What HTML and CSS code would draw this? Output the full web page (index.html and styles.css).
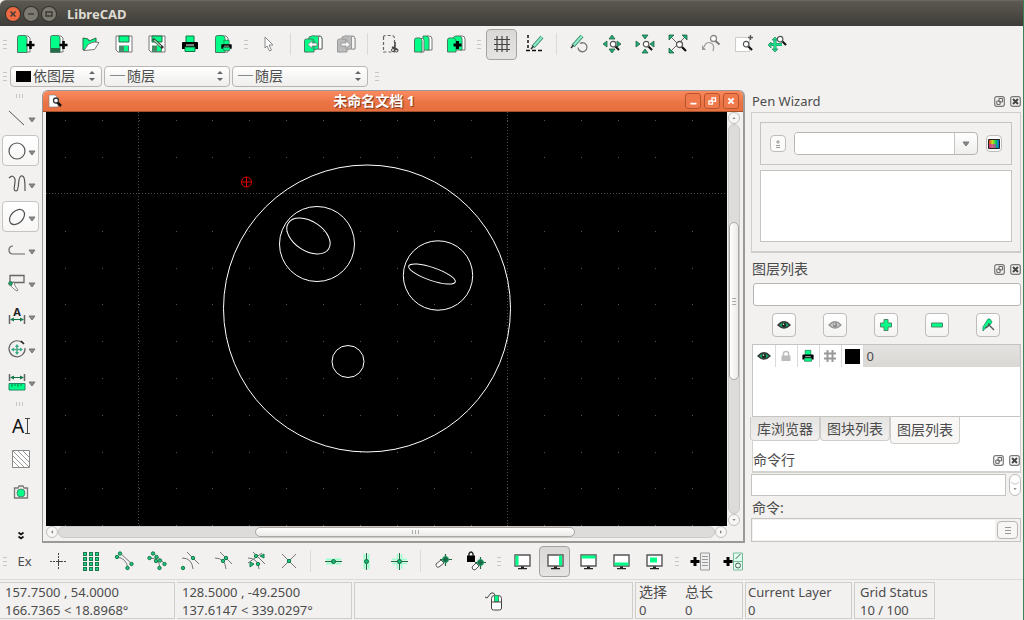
FILE: index.html
```html
<!DOCTYPE html>
<html lang="zh-CN">
<head>
<meta charset="utf-8">
<title>LibreCAD</title>
<link rel="stylesheet" href="styles.css">
</head>
<body>
<svg class="defs" aria-hidden="true">
  <defs>
    <symbol id="eye" viewBox="0 0 14 10"><path d="M1 5Q7-1.500 13 5Q7 11 1 5z" fill="currentColor" stroke="#333" stroke-width="1.300"/><circle cx="7" cy="5" r="2.200" fill="#222"/><circle cx="6.500" cy="4.300" r=".8" fill="#dfd"/></symbol>
    <symbol id="printer" viewBox="0 0 20 20"><path d="M6 2h8v7H6z" fill="#0f8" stroke="#174" /><path d="M3 8h14q1 0 1 1v6h-3v-2H5v2H2V9q0-1 1-1z" fill="#000"/><path d="M6 11h8" stroke="#fff"/><path d="M5 13h10v4.500H5z" fill="#0f8" stroke="#174"/></symbol>
    <symbol id="lens" viewBox="0 0 12 12"><path d="M7 7l4 4" stroke="#111" stroke-width="2.200"/><circle cx="4.500" cy="4.500" r="3" fill="#fff" stroke="#555" stroke-width="1.300"/></symbol>
    <symbol id="monitor" viewBox="0 0 20 20"><path d="M3 4h15v11H3z" fill="#fff" stroke="#555" stroke-width="1.400"/><path d="M9 15.500h3V17h3v1.200H6V17h3z" fill="#222"/></symbol>
    <symbol id="float" viewBox="0 0 11 11"><rect x=".7" y=".7" width="9.600" height="9.600" rx="2" fill="none" stroke="#777" stroke-width="1.200"/><path d="M5 2.500h3.500V6H5zM2.800 5h3.400v3.400H2.800z" fill="#f2f1f0" stroke="#666"/></symbol>
    <symbol id="close" viewBox="0 0 11 11"><rect x=".7" y=".7" width="9.600" height="9.600" rx="2" fill="none" stroke="#777" stroke-width="1.200"/><path d="M3 3l5 5M8 3L3 8" stroke="#444" stroke-width="2"/></symbol>
    <symbol id="updown" viewBox="0 0 8 12"><path d="M1 4l3-3 3 3zM1 8l3 3 3-3z" fill="#666"/></symbol>
    <symbol id="down" viewBox="0 0 8 6"><path d="M1 1h6L4 5z" fill="#888" stroke="#777"/></symbol>
    <linearGradient id="hue"><stop offset="0" stop-color="#e22"/><stop offset=".35" stop-color="#cd2"/><stop offset=".65" stop-color="#1c5"/><stop offset="1" stop-color="#15f"/></linearGradient>
  </defs>
</svg>

<header class="titlebar">
  <button class="wm wm-close" aria-label="关闭"><svg viewBox="0 0 14 14"><path d="M4.500 4.500l5 5M9.500 4.500l-5 5"/></svg></button>
  <button class="wm" aria-label="最小化"><svg viewBox="0 0 14 14"><path d="M4 7h6"/></svg></button>
  <button class="wm" aria-label="最大化"><svg viewBox="0 0 14 14"><path d="M4 5h6v4H4z"/></svg></button>
  <h1>LibreCAD</h1>
</header>

<nav class="toolbar" aria-label="文件">
  <i class="grip first"></i>
  <button class="tool" aria-label="新建"><svg viewBox="0 0 20 20"><path d="M10 2h3l2 2v14h-5z" fill="#fff" stroke="#777"/><path d="M2.500 3.500q0-2 2-2H10q2 1 2 3v14H2.500z" fill="#0f8" stroke="#4a7a60"/><path d="M15.500 7v8M11.500 11h8" stroke="#000" stroke-width="2.600"/></svg></button>
  <button class="tool" aria-label="从模板新建"><svg viewBox="0 0 20 20"><path d="M10 2h3l2 2v14h-5z" fill="#fff" stroke="#777"/><path d="M2.500 3.500q0-2 2-2H10q2 1 2 3v14H2.500z" fill="#0f8" stroke="#4a7a60"/><path d="M3 14h9v4H3z" fill="#276b48"/><path d="M15.500 7v8M11.500 11h8" stroke="#000" stroke-width="2.600"/></svg></button>
  <button class="tool" aria-label="打开"><svg viewBox="0 0 20 20"><path d="M2 4l5 1 1 2 7-3v4L8 10l-4 6H2z" fill="#0f8" stroke="#276b48"/><path d="M3 16.500L7.500 10 13 8l5 .5-4.500 7z" fill="#fff" stroke="#777"/></svg></button>
  <button class="tool" aria-label="保存"><svg viewBox="0 0 20 20"><path d="M2 2h16v16H4l-2-2z" fill="#fff" stroke="#777"/><path d="M5 2h10v6H5z" fill="#0f8" stroke="#276b48"/><path d="M5 11.500h10V18H5z" fill="#4a8968"/><path d="M10 12h4v5h-4z" fill="#0f8"/></svg></button>
  <button class="tool" aria-label="另存为"><svg viewBox="0 0 20 20"><path d="M2 2h16v16H4l-2-2z" fill="#fff" stroke="#777"/><path d="M5 2h10v6H5z" fill="#0f8" stroke="#276b48"/><path d="M5 11.500h10V18H5z" fill="#4a8968"/><path d="M10 12h4v5h-4z" fill="#0f8"/><path d="M6 5l10 9" stroke="#333" stroke-width="3"/><path d="M7 6l7 6.500" stroke="#9da" stroke-width="1.500"/></svg></button>
  <button class="tool" aria-label="打印"><svg><use href="#printer"/></svg></button>
  <button class="tool" aria-label="打印预览"><svg viewBox="0 0 20 20"><path d="M10 2h3l2 2v14h-5z" fill="#fff" stroke="#777"/><path d="M2.500 3.500q0-2 2-2H10q2 1 2 3v14H2.500z" fill="#0f8" stroke="#4a7a60"/><use href="#printer" x="7" y="5" width="13" height="13"/></svg></button>
  <i class="grip"></i>
  <button class="tool" aria-label="选择"><svg viewBox="0 0 20 20"><path d="M6 3l8 8h-4l2.500 5-2 1L8 12l-2 2z" fill="#fff" stroke="#888"/></svg></button>
  <i class="sep"></i>
  <button class="tool" aria-label="撤销"><svg viewBox="0 0 20 20"><path d="M6 5V3q4-2 6-1h5q2 0 2 3v10h-5L3 18z" fill="#0f8" stroke="#4a7a60"/><path d="M15.500 2.500h2q1.500 1 1.500 3V15h-3.500z" fill="#fff" stroke="#777"/><path d="M1.500 6.500q0-1.500 2-1.500H9q2 0 2 2v11H1.500z" fill="#0f8" stroke="#4a7a60"/><path d="M5 10.500l4-4V9h5v3H9v2.500z" fill="#fff" stroke="#666" stroke-width=".7"/></svg></button>
  <button class="tool" aria-label="重做" disabled><svg viewBox="0 0 20 20"><path d="M6 5V3q4-2 6-1h5q2 0 2 3v10h-5L3 18z" fill="#bbb" stroke="#999"/><path d="M15.500 2.500h2q1.500 1 1.500 3V15h-3.500z" fill="#f4f4f4" stroke="#999"/><path d="M1.500 6.500q0-1.500 2-1.500H9q2 0 2 2v11H1.500z" fill="#bbb" stroke="#999"/><path d="M14 10.500l-4-4V9H5v3h5v2.500z" fill="#f4f4f4" stroke="#888" stroke-width=".7"/></svg></button>
  <i class="sep"></i>
  <button class="tool" aria-label="剪切"><svg viewBox="0 0 20 20"><path d="M3.500 3.500q0-2 2-2h7q2 1 2 3V18h-11z" fill="none" stroke="#666" stroke-width="1.200" stroke-dasharray="3 2"/><path d="M15 8v7M12 13l6 3" stroke="#444" stroke-width="1.500"/><circle cx="13" cy="16" r="1.500" fill="none" stroke="#444"/><circle cx="16.500" cy="16.500" r="1.500" fill="none" stroke="#444"/></svg></button>
  <button class="tool" aria-label="复制"><svg viewBox="0 0 20 20"><path d="M14 2h2q3 0 3 3v11h-5z" fill="#fff" stroke="#777"/><path d="M10 2h4q2 1 2 3v11h-6z" fill="#0f8" stroke="#4a7a60"/><path d="M7 4.500h2.500q1.500 0 1.500 2V18H7z" fill="#fff" stroke="#777"/><path d="M1.500 6q0-2 2-2H7q2 1 2 3v11H1.500z" fill="#0f8" stroke="#4a7a60"/></svg></button>
  <button class="tool" aria-label="粘贴"><svg viewBox="0 0 20 20"><path d="M14 2h2q3 0 3 3v11h-5z" fill="#fff" stroke="#777"/><path d="M7 4q1-2 3-2h4q2 1 2 3v11H7z" fill="#0f8" stroke="#4a7a60"/><path d="M1.500 6q0-2 2-2H8q2 1 2 3v11H1.500z" fill="#0f8" stroke="#4a7a60"/><path d="M11.500 7v8M7.500 11h8" stroke="#000" stroke-width="3"/></svg></button>
  <i class="grip"></i>
  <button class="tool pressed" aria-label="栅格" aria-pressed="true"><svg viewBox="0 0 20 20"><path d="M5 2v16M10 2v16M15 2v16M2 5.500h16M2 10.500h16M2 15.500h16" stroke="#444" stroke-width="1.200"/></svg></button>
  <button class="tool" aria-label="草图模式"><svg viewBox="0 0 20 20"><path d="M3 1v15.500" stroke="#111" stroke-width="1.500" stroke-dasharray="3 2"/><path d="M1 16.500h17" stroke="#111" stroke-width="1.500" stroke-dasharray="4 2"/><path d="M17 3L8 13" stroke="#486" stroke-width="4"/><path d="M17 3L8 13" stroke="#8ec" stroke-width="2"/><path d="M8.500 12L6 15" stroke="#333" stroke-width="1.500"/></svg></button>
  <i class="sep"></i>
  <button class="tool" aria-label="重绘"><svg viewBox="0 0 20 20"><path d="M11 9.500a4.500 4.500 0 1 1-2 4" fill="none" stroke="#777" stroke-width="1.300"/><path d="M13 2L4 12" stroke="#486" stroke-width="4"/><path d="M13 2L4 12" stroke="#8ec" stroke-width="2"/><path d="M4.500 11L2 14" stroke="#333" stroke-width="1.500"/></svg></button>
  <button class="tool" aria-label="放大"><svg viewBox="0 0 20 20"><path d="M7 5l3-4 3 4zM7 15l3 4 3-4zM5 7l-4 3 4 3zM15 7l4 3-4 3z" fill="#2a7" stroke="#264" stroke-width=".8"/><use href="#lens" x="7" y="6" width="11" height="11"/></svg></button>
  <button class="tool" aria-label="缩小"><svg viewBox="0 0 20 20"><path d="M7 1l3 4 3-4zM7 19l3-4 3 4zM1 7l4 3-4 3zM19 7l-4 3 4 3z" fill="#2a7" stroke="#264" stroke-width=".8"/><use href="#lens" x="7" y="6" width="11" height="11"/></svg></button>
  <button class="tool" aria-label="自动缩放"><svg viewBox="0 0 20 20"><path d="M3 3l14 14M17 3L3 17" stroke="#666"/><path d="M1 1h5L1 6zM19 1h-5l5 5zM1 19h5l-5-5z" fill="#2a7" stroke="#264" stroke-width=".8"/><use href="#lens" x="7" y="6" width="12" height="12"/></svg></button>
  <button class="tool" aria-label="上一视图"><svg viewBox="0 0 20 20"><path d="M3 13q2-6 7-4 4 2 2 8" fill="none" stroke="#999" stroke-width="1.200"/><path d="M1 11v5h4z" fill="#999"/><circle cx="12.500" cy="4.500" r="3" fill="#fff" stroke="#888" stroke-width="1.300"/><path d="M14.500 7l4 3.500" stroke="#777" stroke-width="2"/></svg></button>
  <button class="tool" aria-label="窗口缩放"><svg viewBox="0 0 20 20"><path d="M1.500 3.500h14v14h-14z" fill="#fff" stroke="#ccc"/><path d="M16.500 1v5M14 3.500h5" stroke="#555" stroke-width="1.300"/><use href="#lens" x="8" y="6" width="11" height="11"/></svg></button>
  <button class="tool" aria-label="平移"><svg viewBox="0 0 20 20"><path d="M8 4v13M2 10.500h13" stroke="#186" stroke-width="3"/><path d="M8 4v13M2 10.500h13" stroke="#2d8" stroke-width="2"/><path d="M5 6l3-3 3 3zM5 15l3 3 3-3zM4 8l-3 3 3 3z" fill="#2d8" stroke="#286" stroke-width=".7"/><use href="#lens" x="9" y="1" width="11" height="11"/></svg></button>
</nav>

<div class="toolbar pen-bar">
  <i class="grip first"></i>
  <label class="combo color"><svg class="chip" viewBox="0 0 15 11"><path d="M0 0h15v11H0z"/></svg><select aria-label="颜色"><option>依图层</option></select><svg class="arrows"><use href="#updown"/></svg></label>
  <label class="combo width"><svg class="chip" viewBox="0 0 15 11"><path d="M0 4.500h15" stroke="#888"/></svg><select aria-label="线宽"><option>随层</option></select><svg class="arrows"><use href="#updown"/></svg></label>
  <label class="combo line"><svg class="chip" viewBox="0 0 15 11"><path d="M0 4.500h15" stroke="#888"/></svg><select aria-label="线型"><option>随层</option></select><svg class="arrows"><use href="#updown"/></svg></label>
  <i class="grip"></i>
</div>

<main class="workspace">
  <nav class="side" aria-label="绘图工具">
    <i class="grip flat"></i>
    <button class="tool" aria-label="直线"><svg viewBox="0 0 20 20"><path d="M2 3l15 14" stroke="#555"/></svg><svg class="more"><use href="#down"/></svg></button>
    <button class="tool raised" aria-label="圆"><svg viewBox="0 0 20 20"><circle cx="10" cy="10" r="8" fill="none" stroke="#555" stroke-width="1.200"/></svg><svg class="more"><use href="#down"/></svg></button>
    <button class="tool" aria-label="曲线"><svg viewBox="0 0 20 20"><path d="M2 4q4-4 6 1c1 4-3 12 1 12 4 0 1-13 5-15 4-1 4 6 4 15" fill="none" stroke="#555" stroke-width="1.200"/></svg><svg class="more"><use href="#down"/></svg></button>
    <button class="tool raised" aria-label="椭圆"><svg viewBox="0 0 20 20"><ellipse cx="10" cy="10" rx="8.800" ry="6" transform="rotate(-45 10 10)" fill="none" stroke="#555" stroke-width="1.200"/></svg><svg class="more"><use href="#down"/></svg></button>
    <button class="tool" aria-label="多段线"><svg viewBox="0 0 20 20"><path d="M6 6q-4 0-4 4t4 4h12" fill="none" stroke="#666" stroke-width="1.200"/></svg><svg class="more"><use href="#down"/></svg></button>
    <button class="tool" aria-label="选择"><svg viewBox="0 0 20 20"><path d="M3 2.500h14v7H3z" fill="none" stroke="#666" stroke-width="1.300"/><path d="M4 10l3-1 1 4 3 4-1 1-3-2-3-3z" fill="#fff" stroke="#666" stroke-width=".8"/><circle cx="3.500" cy="10.500" r="1.800" fill="#1b7" stroke="#264"/></svg><svg class="more"><use href="#down"/></svg></button>
    <button class="tool" aria-label="标注"><svg viewBox="0 0 20 20"><path d="M2.500 9v9M17.500 9v9" stroke="#666" stroke-width="1.500"/><path d="M4 13.500h12" stroke="#174"/><path d="M3 13.500l4-2v4zM17 13.500l-4-2v4z" fill="#174"/><text x="10" y="10" class="glyph-dim">A</text></svg><svg class="more"><use href="#down"/></svg></button>
    <button class="tool" aria-label="修改"><svg viewBox="0 0 20 20"><path d="M15 3.500a8 8 0 1 0 3 5.500" fill="none" stroke="#666" stroke-width="1.200"/><path d="M14 2l3 3" stroke="#222" stroke-width="1.600"/><path d="M10 6v9M5.500 10.500h9" stroke="#5a8" stroke-width="1.600"/><path d="M8 8l2-3 2 3zM8 13l2 3 2-3zM7 8.500l-3 2 3 2zM13 8.500l3 2-3 2z" fill="#3a8"/></svg><svg class="more"><use href="#down"/></svg></button>
    <button class="tool" aria-label="测量"><svg viewBox="0 0 20 20"><path d="M2.500 2v7M17.500 2v7" stroke="#666" stroke-width="1.500"/><path d="M4 5.500h12" stroke="#174"/><path d="M3 5.500l4-2v4zM17 5.500l-4-2v4z" fill="#174"/><path d="M2 11.500h16V18H2z" fill="#0f8" stroke="#286"/><path d="M5 12v3M8 12v2M11 12v3M14 12v2" stroke="#174"/></svg><svg class="more"><use href="#down"/></svg></button>
    <i class="grip flat"></i>
    <button class="tool single" aria-label="文字"><svg class="text-icon" viewBox="0 0 24 28"><text x="9" y="21" class="glyph-text">A</text><path d="M18.500 6.500v15M16 6.500h5M16 21.500h5" stroke="#444"/></svg></button>
    <button class="tool single" aria-label="填充"><svg viewBox="0 0 20 20"><path d="M1.500 1.500h17v17h-17z" fill="#fff" stroke="#888"/><path d="M2 2l16 16M7 2l11 11M12 2l6 6M2 7l11 11M2 12l6 6" stroke="#999"/></svg></button>
    <button class="tool single" aria-label="图像"><svg viewBox="0 0 20 20"><path d="M3.500 6H7l1-2h4l1 2h3.500v10h-13z" fill="#eee" stroke="#777" stroke-width="1.300"/><circle cx="10" cy="11" r="4" fill="#0f8" stroke="#4a8968"/></svg></button>
    <button class="tool single expand" aria-label="更多"><svg viewBox="0 0 20 20"><path d="M7.500 7.500l2.500 2 2.500-2M7.500 11.500l2.500 2 2.500-2" fill="none" stroke="#111" stroke-width="1.700"/></svg></button>
  </nav>

  <section class="document" aria-label="未命名文档 1">
    <header class="doc-title">
      <svg class="doc-icon" viewBox="0 0 16 16"><path d="M2 2h6l3 3v9H2z" fill="#fff" stroke="#777" stroke-width=".6"/><path d="M10 9l4 4" stroke="#111" stroke-width="2.500"/><circle cx="9" cy="7.500" r="2.500" fill="#fff" stroke="#333" stroke-width="1.300"/></svg>
      <h2>未命名文档 1</h2>
      <button aria-label="最小化"><svg viewBox="0 0 16 16"><path d="M5 11h7" stroke="#fff" stroke-width="2"/></svg></button>
      <button aria-label="还原"><svg viewBox="0 0 16 16"><path d="M8 4.500h4v4H8zM4.500 8h4v3.500h-4z" fill="none" stroke="#fff" stroke-width="1.500"/></svg></button>
      <button aria-label="关闭"><svg viewBox="0 0 16 16"><path d="M5 5l6 6M11 5l-6 6" stroke="#fff" stroke-width="2.300"/></svg></button>
    </header>
    <div class="view">
      <svg class="drawing" role="img" aria-label="图纸">
        <g class="grid-dots">
          <path d="M19 8.500h2000M19 45.500h2000M19 119.500h2000M19 156.500h2000M19 192.500h2000M19 229.500h2000M19 266.500h2000M19 303.500h2000M19 340.500h2000M19 376.500h2000M19 413.500h2000"/>
        </g>
        <path class="grid-lines" d="M0 81.500h2000M92.500 0v2000M461.500 0v2000"/>
        <g class="entities">
          <circle cx="321" cy="196.500" r="143.500"/>
          <circle cx="271" cy="132" r="37.500"/>
          <circle cx="392" cy="163.500" r="34.700"/>
          <circle cx="302" cy="249.500" r="16"/>
          <ellipse cx="262.500" cy="124" rx="24" ry="14.700" transform="rotate(33 262.500 124)"/>
          <ellipse cx="386" cy="162" rx="24.600" ry="6.500" transform="rotate(19 386 162)"/>
        </g>
        <path class="origin" d="M195.500 70h10M200.500 65v10M205.500 70a5 5 0 1 1-10 0a5 5 0 1 1 10 0"/>
      </svg>
      <div class="scroll vertical">
        <button aria-label="向上"><svg viewBox="0 0 12 12"><path d="M4 7l2-2 2 2z"/></svg></button>
        <div class="track"><span class="thumb"></span></div>
        <button aria-label="向下"><svg viewBox="0 0 12 12"><path d="M4 5l2 2 2-2z"/></svg></button>
      </div>
      <div class="scroll horizontal">
        <button aria-label="向左"><svg viewBox="0 0 12 12"><path d="M7 4L5 6l2 2z"/></svg></button>
        <div class="track"><span class="thumb"></span></div>
        <button aria-label="向右"><svg viewBox="0 0 12 12"><path d="M5 4l2 2-2 2z"/></svg></button>
      </div>
    </div>
  </section>

  <aside class="docks">
    <header class="dock-title"><h3>Pen Wizard</h3><button aria-label="浮动"><svg><use href="#float"/></svg></button><button aria-label="关闭"><svg><use href="#close"/></svg></button></header>
    <section class="wizard">
      <div class="wizard-row">
        <button class="mini" aria-label="添加"><svg viewBox="0 0 12 10"><path d="M6 1v4M4 3h4M4 6.500h4M4 8.500h4" stroke="#999"/></svg></button>
        <label class="picker"><select aria-label="颜色列表"><option></option></select><svg class="more"><use href="#down"/></svg></label>
        <button class="mini" aria-label="选取颜色"><svg viewBox="0 0 12 10"><path d="M.5.500h11v9H.5z" fill="url(#hue)" stroke="#222"/><path d="M1 5h7v4H1z" fill="#c2b" opacity=".6"/></svg></button>
      </div>
      <div class="wizard-list"></div>
    </section>
    <header class="dock-title layers-title"><h3>图层列表</h3><button aria-label="浮动"><svg><use href="#float"/></svg></button><button aria-label="关闭"><svg><use href="#close"/></svg></button></header>
    <input class="filter" type="text" aria-label="筛选图层">
    <div class="layer-tools">
      <button aria-label="显示全部"><svg class="eye"><use href="#eye"/></svg></button>
      <button aria-label="隐藏全部"><svg class="eye off"><use href="#eye"/></svg></button>
      <button aria-label="添加图层"><svg viewBox="0 0 14 14"><path d="M5 1.500h4V5h3.500v4H9v3.500H5V9H1.500V5H5z" fill="#0f8" stroke="#4a8968"/></svg></button>
      <button aria-label="删除图层"><svg viewBox="0 0 14 14"><path d="M1.500 5h11v4h-11z" fill="#0f8" stroke="#4a8968"/></svg></button>
      <button aria-label="编辑图层"><svg viewBox="0 0 14 14"><path d="M7 1h2l2 3-2 3-3 1-4 5V9z" fill="#0f8" stroke="#286" stroke-width=".8"/><path d="M4 10q4-1 4-5M8 7l5 5" fill="none" stroke="#555" stroke-width="1.300"/></svg></button>
    </div>
    <div class="layer-box">
      <table class="layers">
        <tr>
          <td><svg class="eye"><use href="#eye"/></svg></td>
          <td><svg viewBox="0 0 14 14"><path d="M4.500 7V4.500q0-2 2.500-2t2.500 2V7" fill="none" stroke="#bbb" stroke-width="1.500"/><path d="M2.500 6.500h9V12h-9z" fill="#bbb"/></svg></td>
          <td><svg><use href="#printer"/></svg></td>
          <td><svg viewBox="0 0 14 14"><path d="M4.500 1v12M9.500 1v12M1 4.500h12M1 9.500h12" stroke="#999" stroke-width="2"/></svg></td>
          <td><svg class="swatch" viewBox="0 0 15 15"><path d="M0 0h15v15H0z"/></svg></td>
          <td class="layer-name">0</td>
        </tr>
      </table>
    </div>
    <div class="tab-area">
      <div class="tabs" role="tablist">
        <button role="tab">库浏览器</button><button role="tab">图块列表</button><button role="tab" aria-selected="true">图层列表</button>
      </div>
      <header class="dock-title"><h3>命令行</h3><button aria-label="浮动"><svg><use href="#float"/></svg></button><button aria-label="关闭"><svg><use href="#close"/></svg></button></header>
    </div>
    <div class="history"><textarea aria-label="命令历史" readonly></textarea><button aria-label="向下滚动"><svg viewBox="0 0 12 20"><path d="M1 6q5 6 10 0" fill="none" stroke="#bbb"/><path d="M4 14l2 2 2-2z" fill="#777"/></svg></button></div>
    <label class="command-label" for="command">命令:</label>
    <div class="command"><input id="command" type="text"><button aria-label="命令菜单"><svg viewBox="0 0 10 10"><path d="M2 2.500h6M2 5.500h6M2 8.500h6" stroke="#999"/></svg></button></div>
  </aside>
</main>

<nav class="toolbar snap-bar" aria-label="捕捉">
  <i class="grip first"></i>
  <button class="tool">Ex</button>
  <button class="tool" aria-label="自由捕捉"><svg viewBox="0 0 20 20"><path d="M10.500 2v6M10.500 13v6M2 10.500h6M13 10.500h6" stroke="#444" stroke-dasharray="2 1"/><path d="M8 10.500h5M10.500 8v5" stroke="#444"/></svg></button>
  <button class="tool" aria-label="捕捉栅格"><svg viewBox="0 0 20 20"><path d="M4 1v19M10 1v19M16 1v19" stroke="#197a4c" stroke-width="4" stroke-dasharray="4 1"/><path d="M4 2v17M10 2v17M16 2v17" stroke="#2c8" stroke-width="2" stroke-dasharray="2 3"/></svg></button>
  <button class="tool" aria-label="捕捉端点"><svg viewBox="0 0 20 20" class="nodes"><path d="M3 6q9 1 11 11M6 2l12 11"/><circle cx="3" cy="6" r="1.700"/><circle cx="6" cy="2.500" r="1.700"/><circle cx="13.500" cy="17" r="1.700"/><circle cx="17.500" cy="13" r="1.700"/></svg></button>
  <button class="tool" aria-label="捕捉实体"><svg viewBox="0 0 20 20" class="nodes"><path d="M3 7q9 0 10 10M6 2l12 11"/><circle cx="2.500" cy="7" r="1.700"/><circle cx="6" cy="2.500" r="1.700"/><circle cx="9.500" cy="6" r="1.700"/><circle cx="9" cy="10" r="1.700"/><circle cx="13" cy="9.500" r="1.700"/><circle cx="12.500" cy="17" r="1.700"/><circle cx="17.500" cy="13" r="1.700"/></svg></button>
  <button class="tool" aria-label="捕捉中心"><svg viewBox="0 0 20 20" class="nodes"><path d="M2 7q10 0 11 11M7 1l12 12"/><circle cx="13" cy="7" r="1.700"/><circle cx="3" cy="17" r="1.700"/></svg></button>
  <button class="tool" aria-label="捕捉中点"><svg viewBox="0 0 20 20" class="nodes"><path d="M2 7q10 0 11 11M7 1l12 12"/><circle cx="13" cy="7" r="1.700"/><circle cx="10" cy="10" r="1.700"/></svg></button>
  <button class="tool" aria-label="捕捉距离"><svg viewBox="0 0 20 20" class="nodes"><path d="M2 7q10 0 11 11M7 1l12 12M2 12l14-10"/><circle cx="10" cy="5" r="1.700"/><circle cx="12" cy="13" r="1.700"/><path d="M18 3l-4 2 4 2zM4 11l4 2-4 3z" class="fill"/></svg></button>
  <button class="tool" aria-label="捕捉交点"><svg viewBox="0 0 20 20" class="nodes"><path d="M3 3l14 14M17 3L3 17"/><path d="M8.500 8.500h3v3h-3z" class="fill"/></svg></button>
  <i class="sep"></i>
  <button class="tool" aria-label="水平限制"><svg viewBox="0 0 20 20"><path d="M3 8.500h15M3 12.500h15" stroke="#9fc" stroke-width="2"/><path d="M2 10.500h17" stroke="#264"/><circle cx="10.500" cy="10.500" r="2" fill="#1b7" stroke="#264"/></svg></button>
  <button class="tool" aria-label="垂直限制"><svg viewBox="0 0 20 20"><path d="M8.500 3v15M12.500 3v15" stroke="#9fc" stroke-width="2"/><path d="M10.500 2v17" stroke="#264"/><circle cx="10.500" cy="10.500" r="2" fill="#1b7" stroke="#264"/></svg></button>
  <button class="tool" aria-label="正交限制"><svg viewBox="0 0 20 20"><path d="M8.500 3v15M12.500 3v15M3 8.500h15M3 12.500h15" stroke="#9fc" stroke-width="1.500"/><path d="M10.500 2v17M2 10.500h17" stroke="#264"/><circle cx="10.500" cy="10.500" r="2" fill="#1b7" stroke="#264"/></svg></button>
  <i class="sep"></i>
  <button class="tool" aria-label="设置相对零点"><svg viewBox="0 0 20 20"><path d="M12.500 3v12M7 8.500h12" stroke="#264" stroke-width="1.200"/><circle cx="12.500" cy="8.500" r="3" fill="#186b4a" stroke="#2a6"/><path d="M3 13l5-4 3 3-5 4q-3 1-3-3z" fill="#fff" stroke="#555"/></svg></button>
  <button class="tool" aria-label="锁定相对零点"><svg viewBox="0 0 20 20"><path d="M1 4.500h8V11H1z"/><path d="M3 5V2.500q2-3 4 0V5" fill="none" stroke="#111" stroke-width="1.300"/><path d="M14.500 6v12M9 11.500h11" stroke="#264" stroke-width="1.200"/><circle cx="14.500" cy="11.500" r="3" fill="#186b4a" stroke="#2a6"/><path d="M6 16l4-4 3 3-4 4q-3 0-3-3z" fill="#fff" stroke="#555"/></svg></button>
  <i class="grip"></i>
  <button class="tool" aria-label="左侧面板"><svg viewBox="0 0 20 20"><use href="#monitor"/><path d="M3.500 4.500h3v10h-3z" fill="#0f8"/></svg></button>
  <button class="tool pressed" aria-label="右侧面板" aria-pressed="true"><svg viewBox="0 0 20 20"><use href="#monitor"/><path d="M14 4.500h3v10h-3z" fill="#0f8"/></svg></button>
  <button class="tool" aria-label="顶部面板"><svg viewBox="0 0 20 20"><use href="#monitor"/><path d="M3.500 4.500h14v3h-14z" fill="#0f8"/></svg></button>
  <button class="tool" aria-label="底部面板"><svg viewBox="0 0 20 20"><use href="#monitor"/><path d="M3.500 11.500h14v3h-14z" fill="#0f8"/></svg></button>
  <button class="tool" aria-label="浮动面板"><svg viewBox="0 0 20 20"><use href="#monitor"/><path d="M6 6.500h7v5H6z" fill="#0f8"/></svg></button>
  <i class="grip"></i>
  <button class="tool" aria-label="添加菜单"><svg viewBox="0 0 20 20"><path d="M5 6v9M.5 10.500h9" stroke="#000" stroke-width="3"/><path d="M10.500 2h9v17h-9z" fill="#eee" stroke="#999"/><path d="M12 5.500h6M12 8.500h6M12 11.500h6M12 14.500h6" stroke="#999"/></svg></button>
  <button class="tool" aria-label="添加工具栏"><svg viewBox="0 0 20 20"><path d="M5 6v9M.5 10.500h9" stroke="#000" stroke-width="3"/><path d="M10.500 2h9v17h-9zM10.500 10.500h9" fill="#dfe" stroke="#7b9"/><path d="M12.500 8l5-5" stroke="#555"/><circle cx="15" cy="14.500" r="2.500" fill="none" stroke="#555"/></svg></button>
</nav>

<footer class="status">
  <div class="cell coords"><p>157.7500 , 54.0000</p><p>166.7365 &lt; 18.8968°</p></div>
  <div class="cell coords"><p>128.5000 , -49.2500</p><p>137.6147 &lt; 339.0297°</p></div>
  <div class="cell mouse"><svg viewBox="0 0 20 20"><path d="M1 6l2 1 4-5q3-1 4 2v2" fill="none" stroke="#444"/><path d="M7.500 7.500q0-3 3-3h4q3 0 3 3V17q0 2-2 2h-6q-2 0-2-2z" fill="#fff" stroke="#444"/><path d="M10.500 4.500h4v6h-4z" fill="#0f8" stroke="#4a8968"/><path d="M7.500 11h10" stroke="#444"/></svg></div>
  <div class="cell totals"><div><p>选择</p><p>0</p></div><div><p>总长</p><p>0</p></div></div>
  <div class="cell layer"><p>Current Layer</p><p>0</p></div>
  <div class="cell grid"><p>Grid Status</p><p>10 / 100</p></div>
</footer>
</body>
</html>
```
FILE: styles.css
```css
* { box-sizing: border-box; }

body {
  margin: 0;
  min-height: 100vh;
  display: flex;
  flex-direction: column;
  background: #f2f1f0;
  border-right: 1px solid #3f7f58;
  color: #4c4c4c;
  font: 13px/18px "Noto Sans", "Noto Sans CJK SC", sans-serif;
}

h1, h2, h3, p { margin: 0; font-size: inherit; }
h3 { font-weight: normal; }
button, input, select, textarea { font: inherit; color: inherit; margin: 0; }
button { padding: 0; border: 0; background: none; }
svg { flex: none; display: block; overflow: hidden; }
.defs { position: absolute; width: 0; height: 0; }

/* Application title bar */
.titlebar {
  height: 26px;
  display: flex;
  align-items: center;
  gap: 4px;
  padding-left: 6px;
  background: linear-gradient(#5b5950, #3e3c38);
  border-top: 1px solid #6a675e;
  border-radius: 6px 0 0 0;
}
.titlebar h1 { margin-left: 7px; color: #dfdbd2; font-weight: bold; }
.wm { width: 14px; height: 14px; border-radius: 50%; background: #7d7a72; box-shadow: 0 0 0 1px #35332f; }
.wm path { fill: none; stroke: #3a3834; stroke-width: 1.4; }
.wm-close { background: #ee6a42; }

/* Toolbars */
.toolbar { height: 36px; flex: none; display: flex; align-items: center; }
.tool {
  width: 31px;
  height: 31px;
  margin: 0 1px;
  flex: none;
  display: flex;
  align-items: center;
  justify-content: center;
  border: 1px solid transparent;
  border-radius: 4px;
}
.tool svg { width: 20px; height: 20px; overflow: visible; }
.pressed { border-color: #a6a39f; background: linear-gradient(#dad8d6, #e6e4e2); }
.raised { border-color: #c6c4c2; background: linear-gradient(#fff, #f7f6f5); }
.grip {
  width: 4px;
  height: 9px;
  margin: 0 4px 0 5px;
  flex: none;
  background: repeating-linear-gradient(#c8c6c4 0 1px, transparent 1px 4px);
}
.grip.first { margin: 0 1px 0 3px; }
.sep { width: 1px; height: 22px; margin: 0 5px; background: #dcdad8; }

.pen-bar { height: 28px; gap: 2px; }
.combo {
  height: 21px;
  display: flex;
  align-items: center;
  gap: 2px;
  padding: 0 5px;
  border: 1px solid #b8b5b2;
  border-radius: 4px;
  background: linear-gradient(#fff, #efeeed);
  font-size: 14px;
}
.combo select {
  flex: 1;
  min-width: 0;
  height: 19px;
  padding: 0;
  appearance: none;
  border: 0;
  background: none;
}
.chip { width: 15px; height: 11px; }
.arrows { width: 8px; height: 12px; }
.color { width: 92px; }
.width { width: 126px; }
.line { width: 136px; }

/* Drawing tools */
.workspace { flex: 1; display: grid; grid-template-columns: 42px 1fr 278px; }
.side { display: flex; flex-direction: column; }
.side .tool { width: 37px; margin: 1px 2px; justify-content: flex-start; padding-left: 4px; }
.side .tool svg.more { width: 8px; height: 6px; margin: 4px 0 0 1px; }
.side .single { justify-content: center; padding: 0; }
.side .tool .text-icon { width: 24px; height: 28px; }
.side .expand { margin-top: auto; height: 15px; }
.grip.flat {
  width: 9px;
  height: 4px;
  margin: 4px 16px 3px;
  background: repeating-linear-gradient(90deg, #c8c6c4 0 1px, transparent 1px 3px);
}
.glyph-dim { font: bold 11px "Noto Sans", sans-serif; text-anchor: middle; fill: #222; }
.glyph-text { font: 19px "Noto Sans", sans-serif; text-anchor: middle; fill: #111; }

/* Document window */
.document {
  display: flex;
  flex-direction: column;
  padding: 0 3px 3px;
  border: 1px solid #9b9996;
  border-right-width: 2px;
  border-bottom-width: 2px;
  border-radius: 6px 6px 0 0;
  overflow: hidden;
}
.doc-title {
  height: 21px;
  margin: 0 -3px;
  padding: 0 4px;
  display: flex;
  align-items: center;
  gap: 3px;
  background: linear-gradient(#fb8a60, #ea7344 60%, #e8703f);
  border-bottom: 1px solid #a4502d;
}
.doc-title h2 {
  flex: 1;
  text-align: center;
  color: #fff;
  font-size: 14px;
  font-weight: bold;
  text-shadow: 1px 1px 1px #70331c;
}
.doc-title button { border: 1px solid #b4552e; border-radius: 3px; background: #f0794b; }
.doc-title button svg { width: 14px; height: 14px; }
.doc-icon { width: 16px; height: 16px; }
.view { flex: 1; display: grid; grid-template: 1fr 12px / 1fr 13px; }
.drawing { width: 100%; height: 100%; min-height: 300px; background: #000; }
.grid-dots { stroke: #555; stroke-dasharray: 1 35.87; shape-rendering: crispEdges; }
.grid-lines { stroke: #4a4a4a; stroke-dasharray: 1 2; shape-rendering: crispEdges; }
.entities { fill: none; stroke: #fff; }
.origin { fill: none; stroke: #e00000; }
.scroll { display: flex; }
.scroll button { width: 12px; height: 12px; border: 1px solid #c2c0bd; border-radius: 6px; background: #f7f6f5; }
.scroll button svg { width: 10px; height: 10px; fill: #666; }
.track { flex: 1; display: flex; background: #dedcda; border: 1px solid #ccc9c6; border-radius: 6px; }
.track::before, .track::after { content: ""; }
.thumb { display: grid; place-items: center; border: 1px solid #aaa7a4; border-radius: 6px; background: linear-gradient(90deg, #fff, #ebe9e7); }
.thumb::before { content: ""; }
.vertical { flex-direction: column; width: 12px; margin-left: 1px; }
.vertical .track { flex-direction: column; }
.vertical .track::before { flex: 98; }
.vertical .thumb { flex: 158; }
.vertical .track::after { flex: 134; }
.vertical .thumb::before { width: 4px; height: 7px; background: repeating-linear-gradient(#aaa 0 1px, transparent 1px 3px); }
.horizontal { height: 12px; }
.horizontal .track::before { flex: 198; }
.horizontal .thumb { flex: 321; background: linear-gradient(#fff, #ebe9e7); }
.horizontal .track::after { flex: 140; }
.horizontal .thumb::before { width: 7px; height: 4px; background: repeating-linear-gradient(90deg, #aaa 0 1px, transparent 1px 3px); }

/* Docks */
.docks { display: flex; flex-direction: column; padding: 0 2px 0 6px; min-width: 0; }
.dock-title { height: 22px; flex: none; display: flex; align-items: center; gap: 5px; padding: 0 0 0 1px; }
.dock-title h3 { flex: 1; }
.dock-title svg { width: 11px; height: 11px; }
.layers-title, .tab-area .dock-title { font-size: 14px; }
.layers-title { margin-top: 5px; }
.wizard { padding: 9px 8px; border: 1px solid #cfcdca; border-width: 1px 1px 2px; }
.wizard-row { height: 43px; display: flex; align-items: center; gap: 8px; padding: 0 9px; border: 1px solid #c6c4c1; }
.wizard-list { height: 72px; margin-top: 5px; border: 1px solid #c6c4c1; background: #fff; }
.mini { width: 16px; height: 17px; display: grid; place-items: center; border: 1px solid #bfbcb9; border-radius: 4px; background: #fbfbfa; }
.mini svg { width: 12px; height: 10px; }
.picker {
  flex: 1;
  height: 23px;
  display: flex;
  align-items: center;
  padding-right: 7px;
  border: 1px solid #b8b5b2;
  border-radius: 4px;
  background: linear-gradient(#fff, #efeeed);
}
.picker select { flex: 1; min-width: 0; height: 21px; margin-right: 7px; appearance: none; border: 0; border-right: 1px solid #c6c4c1; border-radius: 3px 0 0 3px; background: #fff; }
.picker .more { width: 8px; height: 6px; }
.filter { width: auto; height: 23px; margin: 3px 0 0 2px; padding: 0 4px; border: 1px solid #b8b5b2; border-radius: 3px; background: #fff; }
.layer-tools { display: flex; justify-content: space-between; margin: 7px 21px; }
.layer-tools button { width: 24px; height: 24px; display: grid; place-items: center; border: 1px solid #bfbcb9; border-radius: 4px; background: linear-gradient(#fff, #f4f3f2); }
.layer-tools svg { width: 14px; height: 14px; }
.layer-tools .eye, .layers .eye { width: 14px; height: 10px; color: #15a564; }
.layer-tools .off { color: #999; opacity: .5; }
.layer-box { flex: 1; min-height: 60px; margin-left: 1px; border: 1px solid #c6c4c1; background: #fff; }
.layers { width: 100%; border-collapse: collapse; }
.layers td { width: 22px; height: 22px; padding: 0 3px; border-right: 1px solid #dcdad8; }
.layers svg { width: 14px; height: 14px; margin: auto; }
.layers .swatch { width: 15px; height: 15px; }
.layers .layer-name { width: auto; background: linear-gradient(#e4e2e0, #dad8d5); }
.tab-area { margin-left: 1px; border: 1px solid #d4d2cf; border-top: 0; border-bottom-width: 2px; background: #fff; }
.tabs { height: 32px; margin-left: -3px; display: flex; align-items: flex-start; }
.tabs button { height: 24px; padding: 0 6px; border: 1px solid #cfcdca; border-top: 0; border-radius: 0 0 4px 4px; background: linear-gradient(#e6e4e2, #f0efee); font-size: 14px; line-height: 24px; }
.tabs button[aria-selected] { height: 27px; background: #f8f7f6; line-height: 26px; }
.tab-area .dock-title { padding: 0; }
.history { display: flex; gap: 3px; margin-top: 1px; }
.history textarea { flex: 1; min-width: 0; height: 22px; padding: 0; resize: none; overflow: hidden; border: 1px solid #c6c4c1; background: #fff; }
.history button { width: 12px; height: 22px; border: 1px solid #bfbcb9; border-radius: 6px; background: #fff; }
.history svg { width: 10px; height: 20px; }
.command-label { margin: 2px 0 0; padding-left: 1px; font-size: 14px; line-height: 20px; }
.command { display: flex; align-items: center; height: 24px; margin-bottom: 1px; padding-right: 2px; border: 1px solid #c6c4c1; }
.command input { flex: 1; min-width: 0; height: 20px; margin: 0 2px 0 1px; padding: 0 3px; border: 0; background: #fff; }
.command button { width: 21px; height: 18px; display: grid; place-items: center; border: 1px solid #b8b5b2; border-radius: 4px; background: #f7f6f5; }
.command button svg { width: 10px; height: 10px; }

/* Snap toolbar */
.nodes { fill: none; stroke: #777; }
.nodes circle, .nodes .fill { fill: #1fc47c; stroke: #197a4c; }

/* Status bar */
.status { height: 41px; flex: none; display: flex; gap: 2px; padding: 2px 0 1px; border-top: 1px solid #dcdad8; }
.cell { padding: 0 4px; border: 1px solid #cfcdca; white-space: nowrap; }
.coords { width: 175px; border-left: 0; padding-left: 5px; }
.mouse { flex: 1; display: grid; place-items: center; }
.mouse svg { width: 20px; height: 20px; }
.totals { width: 108px; display: flex; gap: 18px; padding-left: 3px; }
.totals p:first-child { font-size: 14px; }
.layer { width: 107px; padding-left: 2px; }
.grid { width: 81px; margin-right: 88px; padding-left: 5px; }
```
